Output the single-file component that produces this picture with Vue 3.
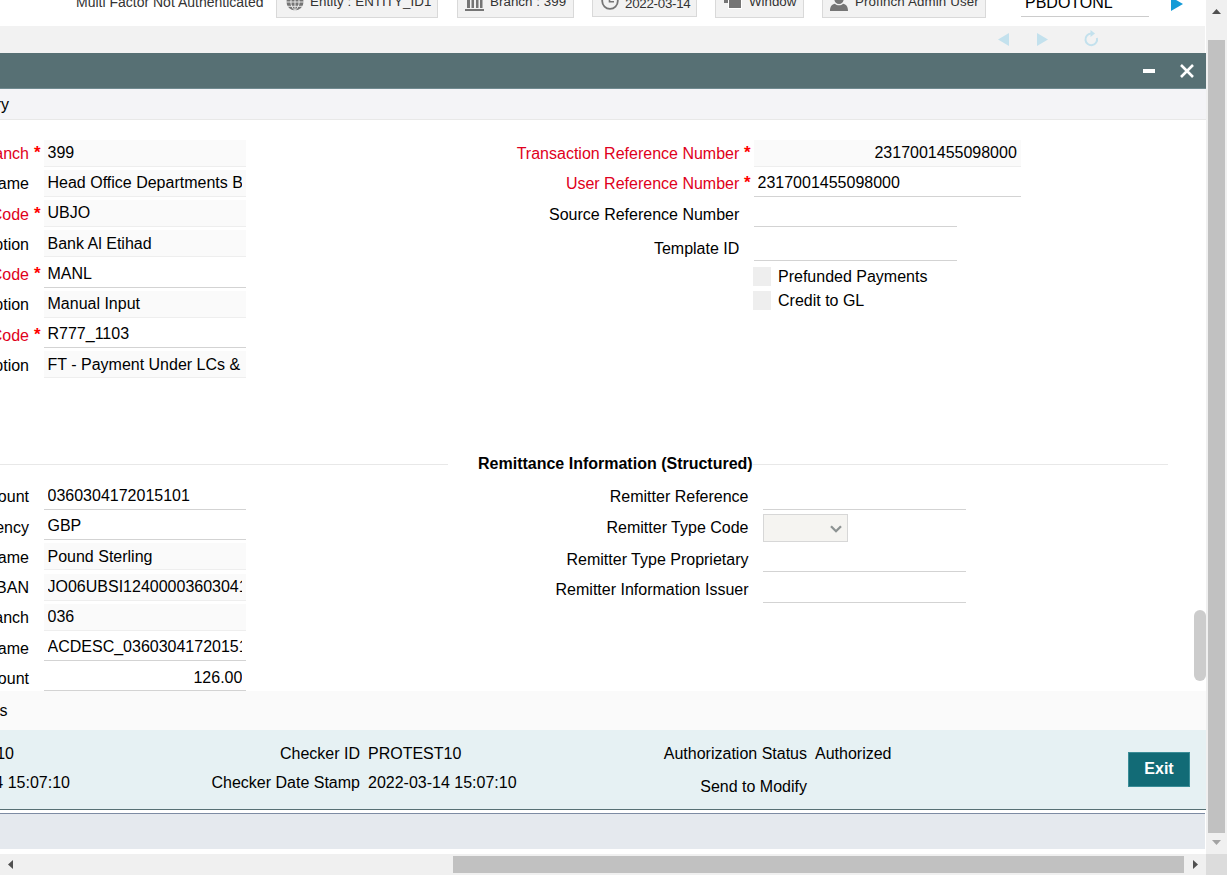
<script setup>
const headFields = [
  { label: 'Branch', req: true, value: '399', ro: true },
  { label: 'Branch Name', value: 'Head Office Departments B', ro: true },
  { label: 'Host Code', req: true, value: 'UBJO', ro: true },
  { label: 'Host Code Description', value: 'Bank Al Etihad', ro: true },
  { label: 'Source Code', req: true, value: 'MANL' },
  { label: 'Source Code Description', value: 'Manual Input', ro: true },
  { label: 'Network Code', req: true, value: 'R777_1103' },
  { label: 'Description', value: 'FT - Payment Under LCs &', ro: true },
]
const accountFields = [
  { label: 'Account', value: '0360304172015101' },
  { label: 'Currency', value: 'GBP' },
  { label: 'Name', value: 'Pound Sterling', ro: true },
  { label: 'IBAN', value: 'JO06UBSI12400003603041', ro: true },
  { label: 'Branch', value: '036', ro: true },
  { label: 'Name', value: 'ACDESC_03603041720151' },
  { label: 'Amount', value: '126.00', num: true },
]
</script>

<template>
  <div class="screen">
    <div class="page">
      <header class="top">
        <span class="mfa">Multi Factor Not Authenticated</span>
        <div class="chip entity">
          <svg width="18" height="18" viewBox="0 0 18 18"><circle cx="9" cy="9" r="8.5" fill="#757575" /><path d="M9 0v18M0 9h18M1.5 4.7h15M1.5 13.3h15M9 .5C3.5 5 3.500 13 9 17.500M9 .5C14.500 5 14.500 13 9 17.500" fill="none" stroke="#f2f2f2" stroke-width=".9" /></svg>
          <span>Entity : ENTITY_ID1</span>
        </div>
        <div class="chip branch">
          <svg width="19" height="18" viewBox="0 0 19 18"><path d="M1 5 9.500 0 18 5zM2 6h3v9H2zM6.500 6h2.500v9H6.500zM11 6h2.500v9H11zM15 6h2.500v9H15zM0 16h19v2H0z" fill="#757575" /></svg>
          <span>Branch : 399</span>
        </div>
        <div class="chip date">
          <svg width="18" height="18" viewBox="0 0 18 18"><circle cx="9" cy="9" r="7.800" fill="none" stroke="#757575" stroke-width="1.800" /><path d="M8.500 4v5.700H13" fill="none" stroke="#757575" stroke-width="1.600" /></svg>
          <span>2022-03-14</span>
        </div>
        <div class="chip window">
          <svg width="18" height="18" viewBox="0 0 18 18"><path d="M0 0h13v12H0z" fill="#757575" /><path d="M4 4h14v14H4z" fill="#fff" /><path d="M5 5h12v12H5z" fill="#757575" /></svg>
          <span>Window</span>
        </div>
        <div class="chip user">
          <svg width="18" height="18" viewBox="0 0 18 18"><ellipse cx="9" cy="5.500" rx="4.800" ry="5.500" fill="#757575" /><path d="M0 18c0-5 2-6.500 5-7.300 2 2 6 2 8 0 3 .8 5 2.300 5 7.300z" fill="#757575" /></svg>
          <span>Profinch Admin User</span>
        </div>
        <div class="fastpath"><span>PBDOTONL</span></div>
        <svg class="go" width="12" height="14" viewBox="0 0 12 14"><path d="M0 0 12 7 0 14z" fill="#149bd7" /></svg>
      </header>

      <div class="nav">
        <svg width="11" height="13" viewBox="0 0 11 13"><path d="M11 0v13L0 6.500z" fill="#c3e1ed" /></svg>
        <svg class="next" width="11" height="13" viewBox="0 0 11 13"><path d="M0 0v13l11-6.500z" fill="#c3e1ed" /></svg>
        <svg class="reload" width="15" height="17" viewBox="0 0 15 17"><path d="M8 3.600H7A5.800 5.800 0 1 0 12.900 8" fill="none" stroke="#c3e1ed" stroke-width="2" /><path d="M6.500 0v7l4.500-3.500z" fill="#c3e1ed" /></svg>
      </div>

      <div class="titlebar">
        <svg width="12" height="4" viewBox="0 0 12 4"><path d="M0 0h12v4H0z" fill="#fff" /></svg>
        <svg width="14" height="14" viewBox="0 0 14 14"><path d="M1 1l12 12M13 1 1 13" stroke="#fff" stroke-width="2.600" /></svg>
      </div>
      <div class="tabs"><span class="clipped">Enter Query</span></div>

      <main class="body">
        <div class="cols first">
          <div class="left">
            <div v-for="(f, i) in headFields" :key="i" class="row">
              <label :class="{ red: f.req }"><span>{{ f.label }}</span></label>
              <b class="star">{{ f.req ? '*' : '' }}</b>
              <div class="field" :class="{ ro: f.ro }"><span>{{ f.value }}</span></div>
            </div>
          </div>
          <div class="right ref">
            <div class="row"><label class="red">Transaction Reference Number</label><b class="star">*</b><div class="field ro wide num"><span>2317001455098000</span></div></div>
            <div class="row"><label class="red">User Reference Number</label><b class="star">*</b><div class="field wide"><span>2317001455098000</span></div></div>
            <div class="row"><label>Source Reference Number</label><b class="star"></b><div class="field mid"></div></div>
            <div class="row lower"><label>Template ID</label><b class="star"></b><div class="field mid"></div></div>
            <div class="check"><i></i><span>Prefunded Payments</span></div>
            <div class="check"><i></i><span>Credit to GL</span></div>
          </div>
        </div>

        <div class="legend"><hr class="l1"><strong>Remittance Information (Structured)</strong><hr class="l2"></div>

        <div class="cols second">
          <div class="left">
            <div v-for="(f, i) in accountFields" :key="i" class="row">
              <label><span>{{ f.label }}</span></label>
              <b class="star"></b>
              <div class="field" :class="{ ro: f.ro, num: f.num }"><span>{{ f.value }}</span></div>
            </div>
          </div>
          <div class="right rem">
            <div class="row"><label>Remitter Reference</label><div class="field"></div></div>
            <div class="row sel"><label>Remitter Type Code</label>
              <div class="select"><svg width="12" height="8" viewBox="0 0 12 8"><path d="M1 1.200l5 5 5-5" fill="none" stroke="#8d9393" stroke-width="2.300" /></svg></div>
            </div>
            <div class="row prop"><label>Remitter Type Proprietary</label><div class="field"></div></div>
            <div class="row issuer"><label>Remitter Information Issuer</label><div class="field"></div></div>
          </div>
        </div>
        <div class="inner-thumb"></div>
      </main>

      <div class="links"><span class="clipped">All Messages</span></div>

      <footer class="audit">
        <div class="maker"><p><span>PROTEST10</span></p><p><span>2022-03-14 15:07:10</span></p></div>
        <div class="pair checker">
          <p><label>Checker ID</label><span>PROTEST10</span></p>
          <p><label>Checker Date Stamp</label><span>2022-03-14 15:07:10</span></p>
        </div>
        <div class="pair status">
          <p><label>Authorization Status</label><span>Authorized</span></p>
          <p class="mod"><label>Send to Modify</label></p>
        </div>
        <button class="exit">Exit</button>
      </footer>
      <div class="strip"></div>
      <div class="hbar">
        <svg width="5" height="9" viewBox="0 0 5 9"><path d="M5 0v9L0 4.500z" fill="#505050" /></svg>
        <div class="hthumb"></div>
        <svg class="ra" width="5" height="9" viewBox="0 0 5 9"><path d="M0 0v9l5-4.500z" fill="#505050" /></svg>
      </div>
    </div>

    <aside class="vbar">
      <svg class="up" width="9" height="5" viewBox="0 0 9 5"><path d="M0 5h9L4.500 0z" fill="#505050" /></svg>
      <div class="vthumb"></div>
      <svg class="down" width="9" height="5" viewBox="0 0 9 5"><path d="M0 0h9L4.500 5z" fill="#a3a3a3" /></svg>
      <div class="corner"></div>
    </aside>
  </div>
</template>

<style>
html, body { margin: 0; overflow: hidden; }
</style>

<style scoped>
.screen { display: flex; width: 1227px; height: 875px; overflow: hidden; background: #fff; color: #000; font: 16px/18px "Liberation Sans", Arial, sans-serif; }
.screen * { box-sizing: border-box; }
svg { display: block; flex: none; }
p { margin: 0; }
.page { width: 1206px; height: 875px; display: flex; flex-direction: column; overflow: hidden; }
.page > * { flex: none; }

.top { display: flex; align-items: flex-start; height: 26px; color: #333; font-size: 13.333px; line-height: 16px; white-space: nowrap; }
.mfa { margin: -6px 0 0 76px; width: 200px; font-size: 14px; }
.chip { display: flex; height: 30px; margin-top: -12px; padding-left: 8px; border: 1px solid #d9d9d9; background: #f2f2f2; }
.chip span { margin: 5px 0 0 7px; }
.chip svg { margin-top: 4px; }
.entity { width: 162px; padding-left: 9px; }
.entity span { margin-left: 6px; letter-spacing: .08px; }
.branch { width: 117px; margin-left: 19px; padding-left: 7px; }
.branch span { margin-left: 6px; letter-spacing: .05px; }
.date { width: 105px; margin: -13px 0 0 18px; }
.date span { margin: 8px 0 0 6px; letter-spacing: -.27px; }
.window { width: 89px; margin-left: 18px; }
.window svg { margin-top: 2px; }
.user { width: 164px; margin-left: 18px; padding-left: 7px; }
.user span { letter-spacing: .12px; }
.fastpath { width: 128px; height: 30px; margin: -13px 0 0 35px; padding: 7px 0 0 4px; border-bottom: 1px solid #ccc; color: #000; font-size: 16px; line-height: 18px; }
.go { margin: -3px 0 0 22px; }

.nav { display: flex; height: 27px; width: 1205px; padding: 7px 0 0 998px; background: #f2f2f2; }
.next { margin-left: 28px; }
.reload { margin: -3px 0 0 36px; }
.titlebar { display: flex; align-items: center; justify-content: flex-end; gap: 25px; height: 36px; padding-right: 12px; background: #577074; border-bottom: 1px solid #708a90; }
.tabs { height: 31px; background: #f4f4f7; border-bottom: 1px solid #e8e8e8; padding-top: 7px; }
.clipped { display: flex; justify-content: flex-end; width: 9px; white-space: nowrap; }
.body { position: relative; height: 571px; overflow: hidden; }
.cols { display: flex; }
.first { padding-top: 19.6px; height: 332px; }
.left { width: 246px; flex: none; }
.row { display: flex; height: 30.25px; }
.row label { display: flex; justify-content: flex-end; flex: none; padding-top: 5.500px; white-space: nowrap; }
.left label { width: 29px; }
.red { color: #e00020; }
.star { width: 15px; flex: none; padding: 4.500px 0 0 5px; color: #f00; font-weight: 700; font-size: 17px; }
.field { width: 202px; height: 27px; flex: none; padding: 4.2px 3.600px 0 3.500px; border-bottom: 1px solid #d3d3d3; white-space: nowrap; }
.field span { display: block; overflow: hidden; }
.ro { background: #fafafa; border-bottom-color: #eee; }
.num { text-align: right; }
.num.wide { padding-right: 4.200px; }
.ref label { width: 493.300px; margin-right: -.3px; }
.wide { width: 267px; }
.mid { width: 203px; }
.lower { padding-top: 3.600px; height: 36px; }
.lower label { padding-top: 5.700px; }
.check { display: flex; align-items: center; height: 24px; margin: -1px 0 1px 507px; }
.check:last-child { margin-top: -1px; }
.check i { width: 18px; height: 19px; margin: -2px 7px 0 0; background: #eee; }
.legend { display: flex; align-items: center; height: 22px; }
.legend hr { border: 0; height: 1px; margin: 2px 0 0; background: #e8e8e8; }
.l1 { width: 448px; }
.l2 { width: 415px; }
.legend strong { margin: 2px 0 0 30px; width: 275px; white-space: nowrap; }
.second { padding-top: 8.850px; }
.second .left label { padding-top: 5.550px; }
.rem label { width: 502.500px; margin-right: 14.500px; }
.rem .field { width: 203px; }
.rem .sel { height: 32px; }
.rem .sel label { padding-top: 6px; }
.rem .prop { height: 30.8px; }
.rem .prop label { padding-top: 5.800px; }
.rem .issuer label { padding-top: 5.200px; }
.select { width: 85px; height: 28px; margin-top: 1px; border: 1px solid #d7d7d7; background: #f5f4f1; padding: 10px 0 0 66px; }
.inner-thumb { position: absolute; left: 1194px; top: 490px; width: 12px; height: 71px; border-radius: 6px; background: #ccc; }
.links { height: 39px; padding-top: 11px; background: #fafafa; }
.links .clipped { width: 7.500px; }
.audit { display: flex; height: 80px; background: #e6f1f3; border-bottom: 1px solid #577074; padding-top: 15px; }
.audit p { display: flex; height: 29px; white-space: nowrap; }
.maker { width: 70px; }
.maker p { justify-content: flex-end; }
.maker p:first-child { width: 14px; }
.pair label { text-align: right; margin-right: 8px; }
.checker label { width: 290px; }
.checker { width: 480px; }
.status label { width: 257px; }
.status { width: 578px; }
.mod { padding-top: 4px; }
.exit { width: 62px; height: 35px; margin-top: 7px; padding: 0 0 2px; border: 1px solid #3b8d97; background: #126b76; color: #fff; font: bold 16px "Liberation Sans", Arial, sans-serif; }
.strip { width: 1205px; height: 36px; margin: 3px 0 5px; background: #e5e9ee; border-top: 1px solid #7d8ba3; }
.hbar { display: flex; align-items: center; height: 21px; padding-left: 8px; background: #f0f0f0; }
.hthumb { width: 731px; height: 17px; margin-left: 440px; background: #c1c1c1; }
.ra { margin-left: 9px; }
.vbar { display: flex; flex-direction: column; align-items: center; width: 21px; background: #f0f0f0; }
.up { margin-top: 9px; }
.vthumb { width: 17px; height: 793px; margin-top: 26px; background: #c1c1c1; }
.down { margin-top: 7px; }
.corner { width: 21px; height: 21px; margin-top: auto; background: #dcdcdc; }
</style>
